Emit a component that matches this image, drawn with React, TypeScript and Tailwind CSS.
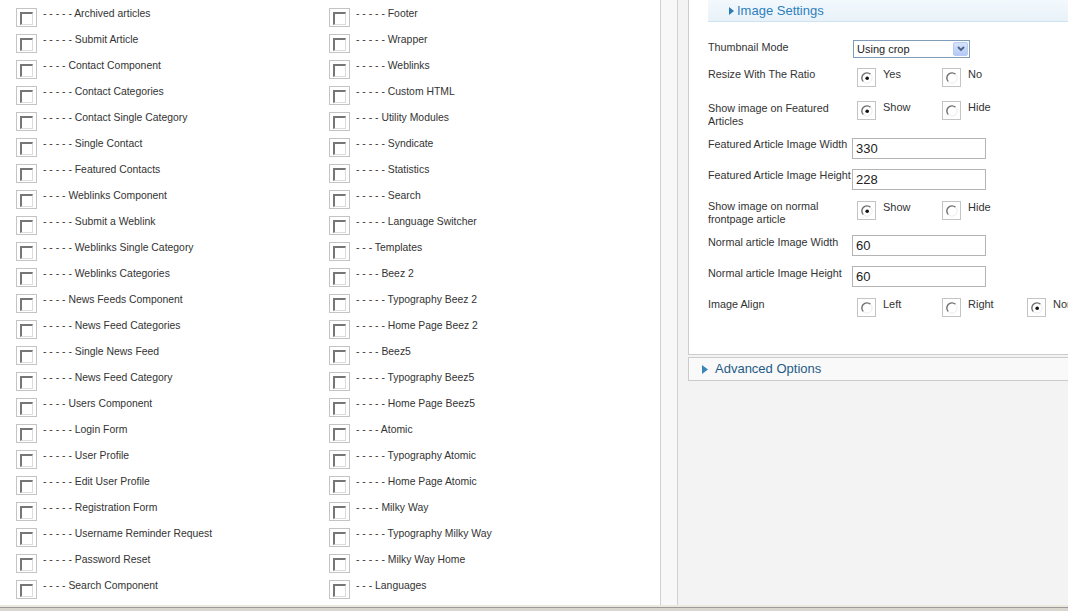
import React from "react"

const leftItems = [
  [5, "Archived articles"],
  [5, "Submit Article"],
  [4, "Contact Component"],
  [5, "Contact Categories"],
  [5, "Contact Single Category"],
  [5, "Single Contact"],
  [5, "Featured Contacts"],
  [4, "Weblinks Component"],
  [5, "Submit a Weblink"],
  [5, "Weblinks Single Category"],
  [5, "Weblinks Categories"],
  [4, "News Feeds Component"],
  [5, "News Feed Categories"],
  [5, "Single News Feed"],
  [5, "News Feed Category"],
  [4, "Users Component"],
  [5, "Login Form"],
  [5, "User Profile"],
  [5, "Edit User Profile"],
  [5, "Registration Form"],
  [5, "Username Reminder Request"],
  [5, "Password Reset"],
  [4, "Search Component"],
  [0, ""],
] as const

const rightItems = [
  [5, "Footer"],
  [5, "Wrapper"],
  [5, "Weblinks"],
  [5, "Custom HTML"],
  [4, "Utility Modules"],
  [5, "Syndicate"],
  [5, "Statistics"],
  [5, "Search"],
  [5, "Language Switcher"],
  [3, "Templates"],
  [4, "Beez 2"],
  [5, "Typography Beez 2"],
  [5, "Home Page Beez 2"],
  [4, "Beez5"],
  [5, "Typography Beez5"],
  [5, "Home Page Beez5"],
  [4, "Atomic"],
  [5, "Typography Atomic"],
  [5, "Home Page Atomic"],
  [4, "Milky Way"],
  [5, "Typography Milky Way"],
  [5, "Milky Way Home"],
  [3, "Languages"],
  [0, ""],
] as const

function CheckBox() {
  return (
    <div className="mt-[8px] w-[21px] h-[19px] shrink-0 border border-[#c4c4c4] bg-white pl-[3px] pt-[3px]">
      <div className="w-[13px] h-[13px] border-t-2 border-l-2 border-t-[#767676] border-l-[#767676] border-b border-r border-b-[#dcdcdc] border-r-[#dcdcdc] bg-white" />
    </div>
  )
}

function MenuRow({ depth, text }: { depth: number; text: string }) {
  const dashes = Array.from({ length: depth }, () => "-").join(" ")
  return (
    <div className="h-[26px] flex items-start gap-[6px]">
      <CheckBox />
      {text && (
        <span className="pt-[7px] leading-[14px] text-[10.4px] text-[#333] whitespace-nowrap">
          {dashes} {text}
        </span>
      )}
    </div>
  )
}

function RadioGlyph({ checked }: { checked: boolean }) {
  return (
    <svg width="12" height="12" viewBox="0 0 12 12">
      <circle cx="6" cy="6" r="5" fill="#fff" />
      <path d="M9.5 2.2 A5 5 0 0 0 2.5 9.8" fill="none" stroke="#6e6e6e" strokeWidth="1.4" />
      <path d="M9.8 2.5 A5 5 0 0 1 2.2 9.5" fill="none" stroke="#ececec" strokeWidth="1" />
      {checked && <circle cx="6.2" cy="6.2" r="1.8" fill="#111" />}
    </svg>
  )
}

function Radio({ label, checked }: { label: string; checked?: boolean }) {
  return (
    <div className="w-[85px] flex items-start shrink-0">
      <div className="w-[19px] h-[19px] border border-[#c4c4c4] flex items-center justify-center shrink-0">
        <RadioGlyph checked={!!checked} />
      </div>
      <span className="ml-[7px] text-[11px] leading-[13px] text-[#333] whitespace-nowrap">{label}</span>
    </div>
  )
}

function TextBox({ value }: { value: string }) {
  return (
    <div className="w-[134px] h-[21px] border border-[#b4b4b4] bg-white pl-[3px] flex items-center text-[13px] text-[#222]">
      {value}
    </div>
  )
}

function Label({ children, pt, wrap }: { children: React.ReactNode; pt: string; wrap?: boolean }) {
  return (
    <div
      className={`w-[144px] shrink-0 text-[10.8px] leading-[13px] text-[#333] ${pt} ${wrap ? "" : "whitespace-nowrap"}`}
    >
      {children}
    </div>
  )
}

export default function App() {
  return (
    <div
      className="w-[1068px] h-[611px] overflow-hidden flex flex-col bg-white"
      style={{ fontFamily: '"Liberation Sans", Arial, sans-serif' }}
    >
      <div className="h-[605px] flex shrink-0 overflow-hidden">
        {/* left: menu assignment list */}
        <div className="w-[661px] shrink-0 bg-white border-r border-[#d0d0d0] pl-[16px] overflow-hidden">
          <div className="grid grid-cols-[313px_1fr]">
            <div className="flex flex-col">
              {leftItems.map(([d, t], i) => (
                <MenuRow key={i} depth={d} text={t} />
              ))}
            </div>
            <div className="flex flex-col">
              {rightItems.map(([d, t], i) => (
                <MenuRow key={i} depth={d} text={t} />
              ))}
            </div>
          </div>
        </div>

        <div className="w-[17px] shrink-0 bg-[#f8f8f8] border-r border-[#d0d0d0]" />

        {/* right: parameters */}
        <div className="flex-1 bg-[#f3f3f3] pl-[10px] overflow-hidden">
          <div className="w-[600px]">
            <div className="bg-white border-l border-b border-[#cccccc] pl-[19px] h-[355px]">
              <div className="h-[22px] bg-gradient-to-b from-[#f3f9fd] to-[#e8f2f9] border-b border-[#cfe2ef] flex items-center pl-[21px]">
                <svg width="5" height="8" viewBox="0 0 5 8" className="mr-[3px]">
                  <path d="M0 0 L5 4 L0 8 Z" fill="#2c7bb6" />
                </svg>
                <span className="text-[13px] text-[#2e7fbd]">Image Settings</span>
              </div>

              <div className="pt-[16px]">
                <div className="h-[24px] flex items-start">
                  <Label pt="pt-[3px]">Thumbnail Mode</Label>
                  <div className="mt-[2px] ml-[1px] w-[117px] h-[18px] border border-[#7f9db9] bg-white flex items-center justify-between">
                    <span className="pl-[3px] text-[11px] text-[#222]">Using crop</span>
                    <div className="w-[15px] h-[14px] mr-[1px] rounded-[2px] border border-[#b7cbf5] bg-gradient-to-b from-[#d8e4fd] to-[#b3c9f6] flex items-center justify-center">
                      <svg width="8" height="6" viewBox="0 0 8 6">
                        <path d="M1 1 L4 4 L7 1" fill="none" stroke="#4d6185" strokeWidth="1.8" />
                      </svg>
                    </div>
                  </div>
                </div>

                <div className="h-[32px] flex items-start">
                  <Label pt="pt-[6px]">Resize With The Ratio</Label>
                  <div className="mt-[6px] ml-[5px] flex">
                    <Radio label="Yes" checked />
                    <Radio label="No" />
                  </div>
                </div>

                <div className="h-[40px] flex items-start">
                  <Label pt="pt-[8px]" wrap>
                    Show image on Featured Articles
                  </Label>
                  <div className="mt-[7px] ml-[5px] flex">
                    <Radio label="Show" checked />
                    <Radio label="Hide" />
                  </div>
                </div>

                <div className="h-[31px] flex items-start">
                  <Label pt="pt-[4px]">Featured Article Image Width</Label>
                  <div className="mt-[4px]">
                    <TextBox value="330" />
                  </div>
                </div>

                <div className="h-[31px] flex items-start">
                  <Label pt="pt-[4px]">Featured Article Image Height</Label>
                  <div className="mt-[4px]">
                    <TextBox value="228" />
                  </div>
                </div>

                <div className="h-[36px] flex items-start">
                  <Label pt="pt-[4px]" wrap>
                    Show image on normal frontpage article
                  </Label>
                  <div className="mt-[5px] ml-[5px] flex">
                    <Radio label="Show" checked />
                    <Radio label="Hide" />
                  </div>
                </div>

                <div className="h-[31px] flex items-start">
                  <Label pt="pt-[4px]">Normal article Image Width</Label>
                  <div className="mt-[3px]">
                    <TextBox value="60" />
                  </div>
                </div>

                <div className="h-[31px] flex items-start">
                  <Label pt="pt-[4px]">Normal article Image Height</Label>
                  <div className="mt-[3px]">
                    <TextBox value="60" />
                  </div>
                </div>

                <div className="flex items-start">
                  <Label pt="pt-[4px]">Image Align</Label>
                  <div className="mt-[4px] ml-[5px] flex">
                    <Radio label="Left" />
                    <Radio label="Right" />
                    <Radio label="None" checked />
                  </div>
                </div>
              </div>
            </div>

            <div className="mt-[2px] h-[24px] bg-[#f9f9f9] border border-[#cccccc] flex items-center pl-[13px]">
              <svg width="6" height="9" viewBox="0 0 6 9" className="mr-[7px]">
                <path d="M0 0 L6 4.5 L0 9 Z" fill="#3b86b8" />
              </svg>
              <span className="text-[13px] text-[#1f5b87]">Advanced Options</span>
            </div>
          </div>
        </div>
      </div>

      <div className="h-[2px] shrink-0 bg-[#ebe9dd]" />
      <div className="h-[1px] shrink-0 bg-[#9a9a9a]" />
      <div className="flex-1 bg-[#d8d6ce]" />
    </div>
  )
}
